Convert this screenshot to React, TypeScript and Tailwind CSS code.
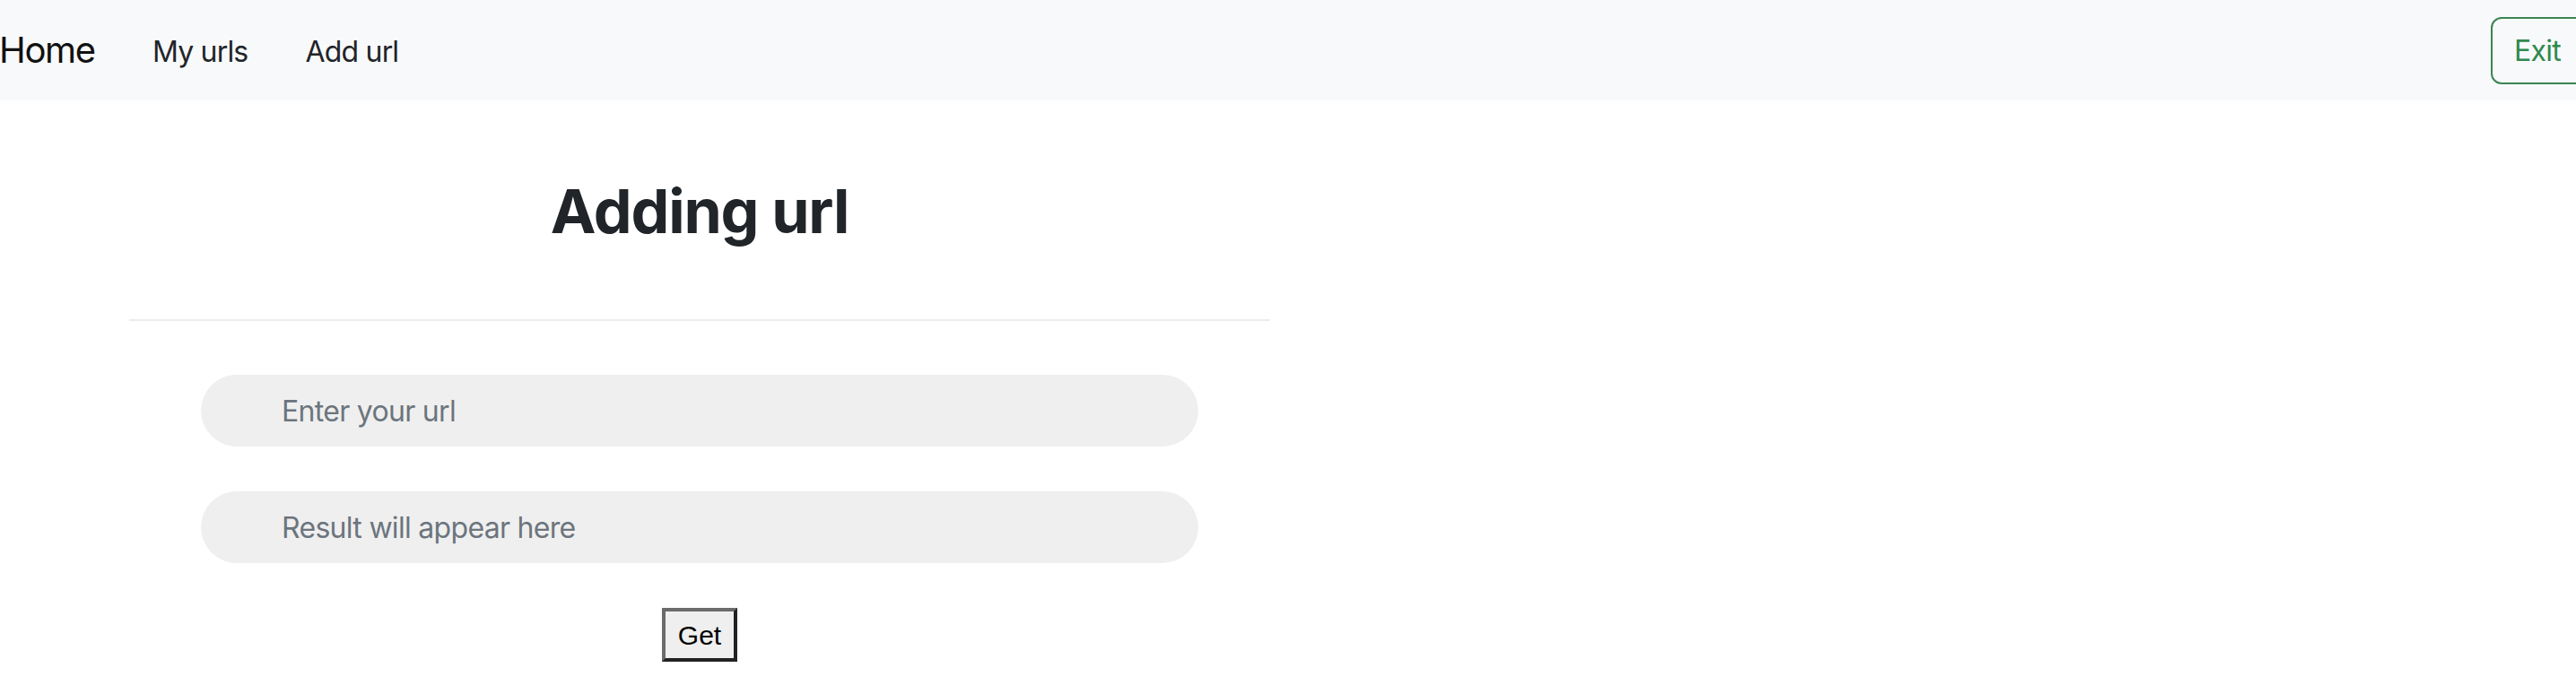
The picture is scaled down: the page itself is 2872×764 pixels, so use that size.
import React, { useState } from "react";

const font = { fontFamily: "Inter, 'Noto Sans', sans-serif" };

const NavBar: React.FC = () => {
  return (
    <nav className="h-[112px] w-full bg-[#f8f9fa] overflow-hidden flex items-center">
      <a className="text-[40px] leading-[60px] tracking-[-1.3px] text-[#111111] mr-8 -ml-[1px]">Home</a>
      <ul className="flex items-center pt-[3px]">
        <li>
          <a className="block px-8 text-[32px] leading-[48px] tracking-[-0.8px] text-[#212529]">My urls</a>
        </li>
        <li>
          <a className="block px-8 text-[32px] leading-[48px] tracking-[-0.8px] text-[#212529]">Add url</a>
        </li>
      </ul>
      <button className="ml-auto -mr-[13px] shrink-0 w-[108px] h-[75px] pt-[2px] border-2 border-[#3a8553] rounded-[12px] text-[32px] tracking-[-0.7px] text-[#2f8a4e] text-left pl-[24px]">
        Exit
      </button>
    </nav>
  );
};

const App: React.FC = () => {
  // States
  const [url, setUrl] = useState("");
  const [result] = useState("");

  return (
    <div className="min-h-screen w-screen overflow-hidden bg-white" style={font}>
      <NavBar />
      <main className="ml-[144px] w-[1272px] flex flex-col items-center">
        <h1 className="mt-[83px] text-[68px] leading-[80px] font-bold text-[#212529] tracking-[-1.2px]">
          Adding url
        </h1>
        <hr className="mt-[81px] w-full border-0 h-[2px] bg-[#ececec]" />
        <div className="w-full px-20 mt-[60px] flex flex-col gap-[50px]">
          <input
            className="h-[80px] w-full rounded-full bg-[#efefef] pl-[90px] text-[32px] tracking-[-0.7px] text-[#212529] outline-none border-0 placeholder:text-[#6c757d]"
            placeholder="Enter your url"
            value={url}
            onChange={(e) => setUrl(e.target.value)}
          />
          <input
            className="h-[80px] w-full rounded-full bg-[#efefef] pl-[90px] text-[32px] tracking-[-0.7px] text-[#212529] outline-none border-0 placeholder:text-[#6c757d]"
            placeholder="Result will appear here"
            value={result}
            readOnly
          />
        </div>
        <button
          className="mt-[50px] w-[84px] h-[60px] flex items-center justify-center bg-[#efefef] border-4 border-t-[#6b6b6b] border-l-[#6b6b6b] border-r-[#222222] border-b-[#222222] text-[30px] text-black"
          style={{ fontFamily: "'Liberation Sans', Arial, sans-serif" }}
        >
          Get
        </button>
      </main>
    </div>
  );
};

export default App;
